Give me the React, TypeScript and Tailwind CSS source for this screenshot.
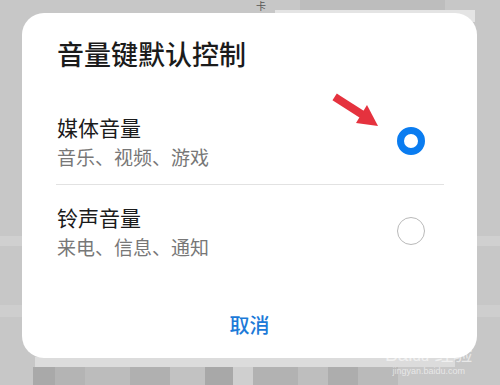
import React from 'react';

const options = [
    { title: '媒体音量', desc: '音乐、视频、游戏', selected: true },
    { title: '铃声音量', desc: '来电、信息、通知', selected: false },
];

function Radio({ on }: { on: boolean }) {
    return on ? (
        <div className="w-[28px] h-[28px] rounded-full border-[7px] border-[#0a7cf0] shrink-0" />
    ) : (
        <div className="w-[28px] h-[28px] rounded-full border-[1.5px] border-[#b9b9b9] shrink-0" />
    );
}

export default function App() {
    return (
        <div
            className="relative w-[500px] h-[385px] overflow-hidden bg-[#c7c7c7]"
            style={{ fontFamily: '"Noto Sans CJK SC", "Noto Sans", sans-serif' }}
        >
            {/* blurred page behind the dialog */}
            <div className="absolute left-0 top-[236px] w-full h-[10px] bg-[#d0d0d0]" />
            <div className="absolute left-0 top-[305px] w-full h-[12px] bg-[#cecece]" />
            <div className="absolute left-[256px] top-[1px] text-[10px] leading-[10px] text-[#555]">卡</div>
            <div className="absolute left-[300px] top-0 w-[145px] h-[14px] bg-[#bdbdbd]" />
            <div className="absolute left-[275px] top-[10px] w-[200px] h-[12px] bg-[#e4e4e4]" />
            <div className="absolute left-[35px] top-[357px] w-[420px] h-[10px] bg-[#dcdcdc]" />
            <div className="absolute left-[33px] top-[367px] flex h-[18px]">
                <div className="w-[22px] bg-[#a9a9a9]" />
                <div className="w-[30px] bg-[#b4b4b4]" />
                <div className="w-[45px] bg-[#bcbcbc]" />
                <div className="w-[40px] bg-[#b0b0b0]" />
                <div className="w-[35px] bg-[#c2c2c2]" />
                <div className="w-[28px] bg-[#a8a8a8]" />
                <div className="w-[20px] bg-[#cfcfcf]" />
                <div className="w-[45px] bg-[#b2b2b2]" />
                <div className="w-[30px] bg-[#bebebe]" />
                <div className="w-[30px] bg-[#adadad]" />
                <div className="w-[40px] bg-[#bababa]" />
            </div>

            {/* dialog */}
            <div className="relative ml-[22px] mt-[13px] w-[455px] h-[345px] bg-white rounded-[22px] flex flex-col">
                <h1 className="ml-[35px] mt-[25px] text-[27px] leading-[32px] font-medium text-[#1b1b1b]">
                    音量键默认控制
                </h1>

                <div className="mt-[43px] flex flex-col">
                    {options.map((o, i) => (
                        <div key={o.title} className="flex flex-col">
                            {i > 0 && <div className="ml-[34px] mr-[33px] h-px bg-[#e2e2e2] mt-[15px] mb-[18px]" />}
                            <div className="flex items-center pl-[35px] pr-[52px]">
                                <div className="flex-1 flex flex-col">
                                    <span className="text-[21px] leading-[28px] text-[#1b1b1b]">{o.title}</span>
                                    <span className="mt-[3px] text-[19px] leading-[25px] text-[#777]">{o.desc}</span>
                                </div>
                                <Radio on={o.selected} />
                            </div>
                        </div>
                    ))}
                </div>

                <div className="mt-auto mb-[19px] text-center text-[20px] leading-[28px] font-medium text-[#1c7ad8]">
                    取消
                </div>
            </div>

            {/* red pointer arrow */}
            <svg className="absolute left-[330px] top-[92px]" width="55" height="40" viewBox="0 0 55 40">
                <line x1="8" y1="7" x2="36" y2="25" stroke="#e5323e" strokeWidth="8" strokeLinecap="square" />
                <polygon points="37,13 48,34 26,31" fill="#e5323e" />
            </svg>

            {/* watermark */}
            <div className="absolute left-[385px] top-[345px] flex flex-col items-center text-white/60 leading-none">
                <span className="text-[19px]" style={{ fontFamily: '"Liberation Sans", "Noto Sans CJK SC", sans-serif' }}>
                    Bai<span className="text-[15px]">du</span> 经验
                </span>
                <span className="text-[9px] mt-[3px]" style={{ fontFamily: '"Liberation Sans", sans-serif' }}>jingyan.baidu.com</span>
            </div>
        </div>
    );
}
